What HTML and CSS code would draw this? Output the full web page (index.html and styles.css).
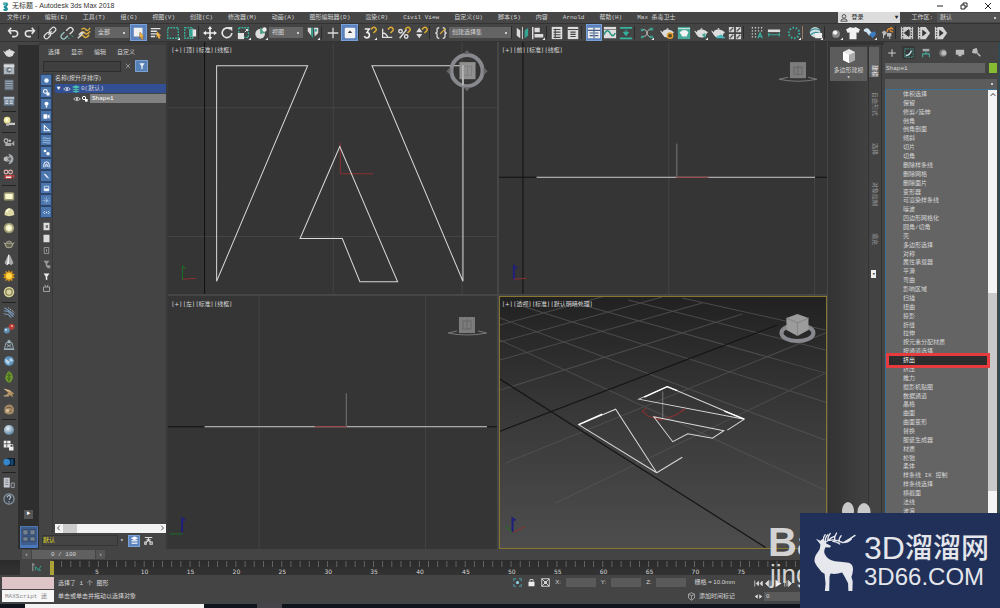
FILE: index.html
```html
<!DOCTYPE html>
<html lang="zh-CN">
<head>
<meta charset="utf-8">
<title>无标题 - Autodesk 3ds Max 2018</title>
<link rel="stylesheet" href="styles.css">
</head>
<body>
<svg class="sprite" aria-hidden="true">
  <defs>
    <linearGradient id="shade" x1="0" y1="0" x2="0" y2="1"><stop offset="0" stop-color="#212121"/><stop offset=".5" stop-color="#3a3a3a"/><stop offset="1" stop-color="#4d4d4d"/></linearGradient>
    <radialGradient id="pearl" cx=".4" cy=".35" r=".7"><stop offset="0" stop-color="#e8f2f8"/><stop offset="1" stop-color="#4d7896"/></radialGradient>
    <radialGradient id="cream" cx=".5" cy=".5" r=".55"><stop offset="0" stop-color="#fffff0"/><stop offset=".55" stop-color="#f4f2c0"/><stop offset="1" stop-color="#8d8b67"/></radialGradient>
  </defs>
  <symbol id="undo" viewBox="0 0 16 16"><path d="M6 2 3 5.500l3 3.500M3 5.500h7a3.300 3.300 0 0 1 0 6.600H7" fill="none" stroke="#e4e4e4" stroke-width="1.800"/></symbol>
  <symbol id="redo" viewBox="0 0 16 16"><path d="m10 2 3 3.500L10 9M13 5.500H6a3.300 3.300 0 0 0 0 6.600h3" fill="none" stroke="#e4e4e4" stroke-width="1.800"/></symbol>
  <symbol id="link" viewBox="0 0 16 16"><g fill="none" stroke="#ddd" stroke-width="1.500"><rect x="7" y="2.500" width="8" height="5" rx="2.500" transform="rotate(-45 11 5)"/><rect x="1" y="8.500" width="8" height="5" rx="2.500" transform="rotate(-45 5 11)"/><path d="m6 10 4-4"/></g></symbol>
  <symbol id="unlink" viewBox="0 0 16 16"><g fill="none" stroke-width="1.500"><path d="M7 5.500 10 2.500a2.500 2.500 0 0 1 4 4L11 9.500" stroke="#ddd"/><path d="m9 11-3 3a2.500 2.500 0 0 1-4-4l3-3" stroke="#9fc6c8"/></g><path d="m9 13 2 2M13 11l2 1" stroke="#39b6a4"/></symbol>
  <symbol id="bind" viewBox="0 0 16 16"><g fill="none" stroke-width="1.600"><path d="M5 4q3-3 5 0t5-2M4 8q3-3 5 0t6-2M3 12q3-3 5 0t6-2" stroke="#d9a93a"/><path d="m1 14 7-7M2 10l4-3" stroke="#ddd"/></g></symbol>
  <symbol id="select" viewBox="0 0 16 16"><path d="M2 2h10v10H2z" fill="#f0f0f0"/><path d="m9 7 5 5-2 .2 1 2.800-2 .7-1-3-1.500 1.500z" fill="#eeb34b" stroke="#6b5221" stroke-width=".5"/></symbol>
  <symbol id="byname" viewBox="0 0 16 16"><path d="M2 3h11M2 6h7M2 9h9M2 12h5" stroke="#e5e5e5" stroke-width="1.600"/><path d="m9 6 5 5-2 .2 1 2.800-2 .7-1-3-1.500 1.500z" fill="#eeb34b"/></symbol>
  <symbol id="marquee" viewBox="0 0 16 16"><rect x="2" y="2" width="12" height="12" fill="none" stroke="#37b8a3" stroke-width="1.500" stroke-dasharray="2 1.200"/><path d="M16 13v3h-3z" fill="#eee"/></symbol>
  <symbol id="window" viewBox="0 0 16 16"><rect x="2" y="2" width="9" height="12" fill="none" stroke="#37b8a3" stroke-width="1.500" stroke-dasharray="2 1.200"/><path d="M7 4h8v8H7z" fill="#e5e5e5"/><path d="M7 4h4v8H7z" fill="#34a391"/></symbol>
  <symbol id="move" viewBox="0 0 16 16"><path d="M8 2v12M2 8h12" stroke="#eee" stroke-width="1.800"/><path d="m8 0 2.500 3.500h-5zM8 16l2.500-3.500h-5zM0 8l3.500-2.500v5zM16 8l-3.500-2.500v5z" fill="#eee"/></symbol>
  <symbol id="rotate" viewBox="0 0 16 16"><path d="M11.500 3.500A5.500 5.500 0 1 0 13.500 8" fill="none" stroke="#e5e5e5" stroke-width="1.900"/><path d="M9 1h5v5z" fill="#e5e5e5"/></symbol>
  <symbol id="scale" viewBox="0 0 16 16"><rect x="2" y="2" width="11" height="11" fill="none" stroke="#37b8a3" stroke-width="1.500" stroke-dasharray="2 1.200"/><path d="M1 8h7v7H1z" fill="#e2e2e2"/><path d="m9 7 3-3M10 4h2v2" stroke="#fff"/><path d="M16 13v3h-3z" fill="#eee"/></symbol>
  <symbol id="place" viewBox="0 0 16 16"><circle cx="7" cy="9" r="5.500" fill="#ddd"/><path d="M7 9V2a6 6 0 0 1 6 6z" fill="#4f9f80"/><circle cx="12" cy="4" r="2.500" fill="#eee"/><path d="M16 13v3h-3z" fill="#eee"/></symbol>
  <symbol id="pivot" viewBox="0 0 16 16"><path d="M2 2h4v9L2 6zM9 2h5v6l-4 4z" fill="#ddd"/><path d="M6 2h2v12l-2-3z" fill="#34a391"/><circle cx="11" cy="5" r="1.500" fill="#34a391"/><path d="M16 13v3h-3z" fill="#eee"/></symbol>
  <symbol id="plus" viewBox="0 0 16 16"><path d="M8 2v12M2 8h12" stroke="#d8d8d8" stroke-width="1.500"/></symbol>
  <symbol id="key" viewBox="0 0 16 16"><rect x="2" y="2" width="12" height="12" rx="1.500" fill="#f2f2f2"/><path d="M8 5 10.500 8h-5z" fill="#333"/></symbol>
  <symbol id="magnet" viewBox="0 0 16 16"><path d="m9 4 2-2a2.500 2.500 0 0 1 3.500 3.500l-2.500 2.500" fill="none" stroke="#dfae33" stroke-width="1.700"/></symbol>
  <symbol id="snap" viewBox="0 0 16 16"><path d="M2 3.500h5L4.500 7.500a3 3 0 1 1-3 4" fill="none" stroke="#eee" stroke-width="1.800"/><use href="#magnet"/><path d="M16 13v3h-3z" fill="#eee"/></symbol>
  <symbol id="angle" viewBox="0 0 16 16"><path d="M3 3v10h11M3 8q4 0 6 5" fill="none" stroke="#ddd" stroke-width="1.500"/><use href="#magnet"/></symbol>
  <symbol id="percent" viewBox="0 0 16 16"><g fill="none" stroke="#ddd" stroke-width="1.600"><circle cx="4" cy="6" r="2"/><circle cx="10.500" cy="12" r="2"/><path d="M11 4 3 14"/></g><use href="#magnet"/></symbol>
  <symbol id="spin" viewBox="0 0 16 16"><path d="m6 2 3.500 5h-7zM6 14l3.500-5h-7z" fill="#ddd"/><use href="#magnet"/></symbol>
  <symbol id="sets" viewBox="0 0 16 16"><path d="M6 2q-3 0-2.500 3T1.500 8q2.500 0 2 3T6 14M10 2q3 0 2.500 3t2 3q-2.500 0-2 3T10 14" fill="none" stroke="#ddd" stroke-width="1.500"/><path d="m7 9 6-6" stroke="#dfae33" stroke-width="1.500"/></symbol>
  <symbol id="mirror" viewBox="0 0 16 16"><path d="m2 2 4 3v9l-4-3z" fill="#ddd"/><path d="m15 2-4 3v9l4-3z" fill="#34a391"/><path d="M8.500 1v14" stroke="#ddd"/></symbol>
  <symbol id="align" viewBox="0 0 16 16"><path d="M2 1v14" stroke="#eee" stroke-width="1.500"/><path d="M4 2h6v5H4zM4 9h10v4H4z" fill="#ddd"/><path d="M16 13v3h-3z" fill="#eee"/></symbol>
  <symbol id="sheet" viewBox="0 0 16 16"><path d="M2 1h12v14H2z" fill="#ddd"/><path d="M4 4h8M4 7h8M4 10h8M4 13h8M6 3v11" stroke="#444" stroke-width="1.200"/></symbol>
  <symbol id="sheet2" viewBox="0 0 16 16"><path d="M2 1h12v14H2z" fill="#ddd"/><path d="M2 4h12M5 7h6M5 9.500h6M5 12h6" stroke="#444" stroke-width="1.300"/></symbol>
  <symbol id="grid4" viewBox="0 0 16 16"><path d="M1 2h14v12H1z" fill="#eee"/><path d="M1 5h14M8 2v12M3 8h4M9 8h4M3 11h4M9 11h4" stroke="#435d86" stroke-width="1.300"/></symbol>
  <symbol id="curve" viewBox="0 0 16 16"><path d="M1 1h14v13H1z" fill="#ddd"/><path d="M1 10q4-8 7-2t6 0" fill="none" stroke="#258f7e" stroke-width="1.800"/><path d="M1 4h14" stroke="#777"/></symbol>
  <symbol id="schematic" viewBox="0 0 16 16"><path d="M1 2h14M1 14h14" stroke="#34b3a0" stroke-width="2"/><path d="M8 4v6M5 7l3 4 3-4z" fill="#34b3a0" stroke="#34b3a0"/></symbol>
  <symbol id="nodes" viewBox="0 0 16 16"><path d="M3 4q5 0 5 4t6 5M3 12q5 0 5-4t6-5" fill="none" stroke="#ccc"/><path d="M1 3h3v3H1zM1 11h3v3H1zM11 2h4v3h-4zM11 11h4v3h-4z" fill="#399d8d"/><path d="M16 13v3h-3z" fill="#eee"/></symbol>
  <symbol id="teapot" viewBox="0 0 16 16"><path d="M2 6 0 5l3 5q2 4 7 3 4-1 4-4l2-2-3-2q-5-2-9 0l-1 2z" fill="#ddd"/><path d="M7 4q2-3 3 0" fill="#eee"/></symbol>
  <symbol id="tpset" viewBox="0 0 16 16"><use href="#teapot"/><circle cx="11.500" cy="11" r="3" fill="#5f4a24" stroke="#e3a232" stroke-width="1.600"/></symbol>
  <symbol id="tpwin" viewBox="0 0 16 16"><path d="M1 1h14v14H1z" fill="#47a99a"/><path d="M1 3h14" stroke="#eee"/><path d="M3 7q6-5 10 0l-2 5H6z" fill="#f2f2f2"/></symbol>
  <symbol id="tpgo" viewBox="0 0 16 16"><use href="#teapot"/><path d="m9 10 4-2v6z" fill="#35a794"/><path d="M16 13v3h-3z" fill="#eee"/></symbol>
  <symbol id="tpcloud" viewBox="0 0 16 16"><use href="#teapot"/><path d="M6 14q0-4 3-3 3-3 5 1 2 0 2 2z" fill="#4cb6bb"/></symbol>
  <symbol id="gallery" viewBox="0 0 16 16"><path d="M1 1h6v6H1zM9 1h6v6H9zM1 9h6v6H1zM9 9h6v6H9z" fill="#d7d7d7"/><path d="m2 6 4-4M10 6l4-4M2 14l4-4M10 14l4-4" stroke="#555" stroke-width="1.500"/></symbol>
  <symbol id="dots" viewBox="0 0 16 16"><path d="M2 2h12M2 5.500h12M2 9h7M2 12.500h7" stroke="#ccc" stroke-width="1.500" stroke-dasharray="1.500 2"/><path d="m9 14 2.500-6 2.500 6M10 12h3" stroke="#37b8a3" stroke-width="1.300" fill="none"/></symbol>
  <symbol id="measure" viewBox="0 0 16 16"><path d="M1 4h14v3H1z" fill="#ddd"/><path d="M1 10h14M2 8v4M14 8v4" stroke="#35a794" stroke-width="1.400"/></symbol>
  <symbol id="circle" viewBox="0 0 16 16"><circle cx="8" cy="8" r="6" fill="none" stroke="#37b8a3" stroke-width="2.200" stroke-dasharray="1.700 2"/><path d="M16 13v3h-3z" fill="#eee"/></symbol>
  <symbol id="globe" viewBox="0 0 16 16"><circle cx="7" cy="7" r="6" fill="#cfdde0"/><path d="M1 6q5-5 12-1M2 10q5-5 11-1" stroke="#378f96" fill="none" stroke-width="1.500"/><path d="M7 8h8v6H7z" fill="#eee"/><path d="M16 13v3h-3z" fill="#eee"/></symbol>
  <symbol id="sphere" viewBox="0 0 16 16"><circle cx="8" cy="9" r="4.500" fill="#898989"/><circle cx="7" cy="7.500" r="2.500" fill="#f4f4f4"/><path d="M16 13v3h-3z" fill="#eee"/></symbol>
  <symbol id="shirt" viewBox="0 0 16 16"><path d="m5 1-5 3 2 4 2-1v8h8V7l2 1 2-4-5-3q-3 2-6 0z" fill="#f1f1f1"/></symbol>
  <symbol id="brush" viewBox="0 0 16 16"><path d="M1 4q4-3 6 0l3 4-3 3-3-4-3-1z" fill="#cfe5f3"/><path d="m7 9 6-3 2 3-4 5z" fill="#3d7fc6"/><path d="M16 13v3h-3z" fill="#eee"/></symbol>
  <symbol id="burst" viewBox="0 0 16 16"><path d="m2 7 3-2 3 3-3 3zM8 8h5v4H8z" fill="#bbb"/><path d="M8 7q0-5 6-4M12 1l3 3M11 5l4 2" stroke="#e08a3a" stroke-width="1.600" fill="none"/><path d="M4 9v5M11 12v3" stroke="#ccc"/></symbol>
  <symbol id="film" viewBox="0 0 16 16"><path d="M1 1h9l5 7-5 7H1z" fill="#d4d4d4"/><path d="M3 1v14" stroke="#444" stroke-width="1.500" stroke-dasharray="1.500 1.500"/><path d="m6 4 5 4-5 4z" fill="#333"/></symbol>
  <symbol id="filml" viewBox="0 0 16 16"><path d="M1 1h14v14H1z" fill="#ccc"/><path d="M3 1v14M13 1v14" stroke="#444" stroke-width="1.500" stroke-dasharray="1.500 1.500"/><path d="m10 4-5 4 5 4zM11 5v6" fill="#333" stroke="#333"/></symbol>
  <symbol id="panel" viewBox="0 0 16 16"><path d="M1 1h14v14H1z" fill="#aeb6bd"/><path d="M1 4h14" stroke="#e6e6e6" stroke-width="2"/><circle cx="8" cy="9" r="3.500" fill="#67737d"/><path d="m6 10 3-3 3 3" fill="#eee"/></symbol>
  <symbol id="lines" viewBox="0 0 16 16"><path d="M2 1h12v14H2z" fill="#65707a"/><path d="M3 3h10M3 6h10M3 9h10M3 12h10" stroke="#a9bccd"/></symbol>
  <symbol id="table" viewBox="0 0 16 16"><path d="M1 2h14v12H1z" fill="#72879a"/><path d="M1 4h14M3 8h4M3 11h4M9 8h4M9 11h4" stroke="#eee" stroke-width="1.500"/></symbol>
  <symbol id="bulb" viewBox="0 0 16 16"><circle cx="5.500" cy="5.500" r="4.500" fill="#eee79b"/><path d="M4 10h4v3H4z" fill="#bbb"/><path d="M8 9h8v3H8z" fill="#c9c9c9"/><circle cx="5" cy="5" r="2" fill="#fffce1"/></symbol>
  <symbol id="cam" viewBox="0 0 16 16"><circle cx="4" cy="5" r="2.500" fill="none" stroke="#bbb" stroke-width="1.500"/><circle cx="9" cy="5" r="1.800" fill="#bbb"/><path d="M3 8h8v4H3zM11 9l4-4v7z" fill="#aaa"/></symbol>
  <symbol id="moon" viewBox="0 0 16 16"><path d="M7 1a7 7 0 0 1 0 14q5-7 0-14" fill="#9ca6aa"/><path d="m1 6 5-2v8l-5-2z" fill="#bbb"/><circle cx="9" cy="8" r="3" fill="#666" stroke="#ccc"/></symbol>
  <symbol id="redcam" viewBox="0 0 16 16"><circle cx="4" cy="4" r="2.500" fill="none" stroke="#e4b5b5" stroke-width="1.500"/><circle cx="10" cy="4" r="2.500" fill="none" stroke="#e4b5b5" stroke-width="1.500"/><path d="M2 8h10v5H2zM12 9l3-2v6z" fill="#c94040"/><path d="M4 10h7v2H4z" fill="#eee"/></symbol>
  <symbol id="plane" viewBox="0 0 16 16"><rect x="1" y="3" width="14" height="11" rx="2" fill="#9b9971"/><rect x="3" y="5" width="10" height="7" rx="1" fill="#fbf9cf"/></symbol>
  <symbol id="dome" viewBox="0 0 16 16"><path d="M2 12Q2 3 8.500 3T15 12q-7 3-13 0" fill="#dcd9a5"/><path d="M5 8q1-4 4-4" stroke="#fffde0" stroke-width="2" fill="none"/></symbol>
  <symbol id="disc" viewBox="0 0 16 16"><circle cx="8" cy="8" r="7" fill="#9a9872"/><circle cx="8" cy="8" r="5.500" fill="url(#cream)"/></symbol>
  <symbol id="pot" viewBox="0 0 16 16"><path d="M3 7h10l-1 5q-4 2-8 0zM1 6l3 4M15 6l-3 4M4 6q4-4 8 0" fill="#656452" stroke="#a9a891" stroke-width="1.300"/></symbol>
  <symbol id="cone" viewBox="0 0 16 16"><path d="M7 1h2l5 11-3 3-3-2-3 2-3-3z" fill="#aaa"/><path d="M7 1h1v12l-3 2z" fill="#eee"/></symbol>
  <symbol id="sun" viewBox="0 0 16 16"><path d="m8 0 1.500 3 3-2v3.500l3.500 1L13.500 8l2.500 2.500-3.500.5v4l-3-2L8 16l-1.500-3-3 2v-4L0 10.500 2.500 8 0 5.500l3.500-1V1l3 2z" fill="#d5961c"/><circle cx="8" cy="8" r="4" fill="#ffd744"/></symbol>
  <symbol id="ring" viewBox="0 0 16 16"><circle cx="8" cy="8" r="7" fill="#d8d39c"/><circle cx="8" cy="8" r="5" fill="#817b4f"/><circle cx="8" cy="8" r="3.500" fill="#d8d3a0"/></symbol>
  <symbol id="waves" viewBox="0 0 16 16"><path d="m1 5 6 1 7 7M2 1l6 4 7 5M1 9l6 1 4 4" fill="none" stroke="#7896b5" stroke-width="1.500"/><path d="m7 1 8 6" stroke="#c6d5df" stroke-dasharray="1.500 1.500" stroke-width="1.300"/></symbol>
  <symbol id="molecule" viewBox="0 0 16 16"><path d="m5 10 6-5" stroke="#ccc" stroke-width="3"/><circle cx="5" cy="10" r="4" fill="#608caf"/><circle cx="11.500" cy="5" r="4" fill="#b63c38"/><circle cx="4" cy="9" r="1.500" fill="#c3dfef"/><circle cx="12" cy="4" r="1.300" fill="#f3b0a2"/></symbol>
  <symbol id="rig" viewBox="0 0 16 16"><path d="M8 1v4M4 5h8l2 8H2zM5 7l6 4M11 7l-6 4M1 14h14" fill="none" stroke="#9eb4c2" stroke-width="1.200"/><path d="M6 2h4v3H6z" fill="#aabbc8"/></symbol>
  <symbol id="ball" viewBox="0 0 16 16"><circle cx="8" cy="8" r="6.500" fill="#5c93bd"/><path d="m3 5 4 2 4-3 3 4-4 1-3 4-4-4z" fill="#b9d4e8"/><path d="m7 7 3 2" stroke="#336a98"/></symbol>
  <symbol id="leaf" viewBox="0 0 16 16"><path d="M8 0q6 4 5 10-2 5-5 6-4-2-5-6Q3 4 8 0" fill="#6f9b32"/><path d="M8 2v13M8 7 5 5M8 7l3-2M8 11l-3-2M8 11l3-2" stroke="#354f16"/></symbol>
  <symbol id="bird" viewBox="0 0 16 16"><path d="m1 2 8 2 6 5-3 1 2 4-5-3-7 1 5-4z" fill="#b39061"/><path d="m2 3 8 3M1 12h7" stroke="#e6d5b3"/></symbol>
  <symbol id="rock" viewBox="0 0 16 16"><path d="M2 6q4-6 10-3 5 6 1 11-6 3-11-1z" fill="#a48965"/><path d="M4 7q4-3 8 0M4 11h7" stroke="#574838" fill="none"/><circle cx="6" cy="10" r="2.500" fill="#d1bd98"/></symbol>
  <symbol id="pearlball" viewBox="0 0 16 16"><circle cx="8" cy="8" r="6.800" fill="url(#pearl)"/></symbol>
  <symbol id="lockwin" viewBox="0 0 16 16"><path d="M1 1h9v9H1z" fill="#eee"/><path d="M1 5h9M5 1v9" stroke="#444"/><path d="M8 9h6v5H8z" fill="#eee"/><path d="M9 9V6h4v3" fill="none" stroke="#ddd"/></symbol>
  <symbol id="toggle" viewBox="0 0 16 16"><rect x="5" y="3" width="11" height="10" fill="#061421"/><circle cx="5" cy="8" r="4.500" fill="#3586cb"/><path d="M10 4h4v8h-4z" fill="#164673"/></symbol>
  <symbol id="doc" viewBox="0 0 16 16"><path d="M1 1h8v13H1z" fill="#c6cad3"/><path d="M3 4h4M3 7h4M3 10h4" stroke="#666"/><path d="M11 8h4v6h-4z" fill="none" stroke="#a9b2bd"/></symbol>
  <symbol id="help" viewBox="0 0 16 16"><circle cx="8" cy="8" r="6.800" fill="#3d444b" stroke="#8e9caa" stroke-width="1.500"/><path d="M5.500 6q.5-3 3-2.500 3 1 1 3.500l-1.500 2M8 11v1.500" fill="none" stroke="#b5c4d2" stroke-width="1.500"/></symbol>
  <symbol id="f-dot" viewBox="0 0 12 12"><circle cx="6" cy="6" r="3" fill="#eef5ff"/></symbol>
  <symbol id="f-shape" viewBox="0 0 12 12"><circle cx="4.500" cy="4.500" r="2.500" fill="none" stroke="#fff" stroke-width="1.500"/><path d="M6 6h4v4H6z" fill="#fff"/></symbol>
  <symbol id="f-light" viewBox="0 0 12 12"><circle cx="6" cy="5" r="2.800" fill="#fff"/><path d="M5 8h2v2H5z" fill="#fff"/></symbol>
  <symbol id="f-cam" viewBox="0 0 12 12"><path d="M2 3h5v6H2zM7.500 5 10 3v6L7.500 7z" fill="#fff"/></symbol>
  <symbol id="f-angle" viewBox="0 0 12 12"><path d="M3 2v7h7z" fill="none" stroke="#fff" stroke-width="1.400"/></symbol>
  <symbol id="f-wave" viewBox="0 0 12 12"><path d="M1 3q2-1 5 0t5 0M1 6q2-1 5 0t5 0M1 9q2-1 5 0t5 0" stroke="#b8d1eb" fill="none"/></symbol>
  <symbol id="f-group" viewBox="0 0 12 12"><circle cx="4" cy="4" r="1.800" fill="#fff"/><circle cx="8" cy="7.500" r="2.200" fill="#fff"/></symbol>
  <symbol id="f-arc" viewBox="0 0 12 12"><path d="M2.500 10V6a3.500 3.500 0 0 1 7 0v4M5 9V6q1-1 2 0v3" fill="none" stroke="#fff" stroke-width="1.300"/></symbol>
  <symbol id="f-bone" viewBox="0 0 12 12"><path d="m2 2 3 1 5 6-4-2z" fill="#fff"/></symbol>
  <symbol id="f-box" viewBox="0 0 12 12"><path d="M3 3h6v6H3z" fill="none" stroke="#e8f2ff"/><path d="M3 6h6v3H3z" fill="#fff"/></symbol>
  <symbol id="f-star" viewBox="0 0 12 12"><path d="M6 1v10M1 6h10M2.500 2.500l7 7M9.500 2.500l-7 7" stroke="#c7def8" stroke-dasharray="1 1"/></symbol>
  <symbol id="f-eye" viewBox="0 0 12 12"><path d="M4 4 2 6l2 2M8 4l2 2-2 2" stroke="#dcecff" fill="none"/><circle cx="6" cy="6" r="1" fill="#fff"/></symbol>
  <symbol id="f-list" viewBox="0 0 12 12"><path d="M2 1h8v10H2z" fill="#ddd"/><path d="M5 4h3v4H5z" fill="#777"/></symbol>
  <symbol id="f-sq" viewBox="0 0 12 12"><path d="M2 1h8v10H2z" fill="#ddd"/></symbol>
  <symbol id="f-sqo" viewBox="0 0 12 12"><path d="M3 2h6v8H3zM6 4v4" fill="none" stroke="#aaa"/></symbol>
  <symbol id="funnel" viewBox="0 0 12 12"><path d="M2 2h8L7 6v5l-2-1V6z" fill="#eee"/></symbol>
  <symbol id="f-fx" viewBox="0 0 12 12"><path d="M2 1h8L7 5v5L5 8V5zM7 7h4v4H7z" fill="#999"/></symbol>
  <symbol id="f-tv" viewBox="0 0 12 12"><path d="M2 4h8v6H2zM4 1l1 3M8 1 7 4" fill="none" stroke="#bbb"/></symbol>
  <symbol id="c-mod" viewBox="0 0 12 12"><path d="M1 1h10v10H1z" fill="none" stroke="#43b0a0" stroke-dasharray="2 1"/><path d="M2 9q5 0 7-6" stroke="#b6dce0" stroke-width="1.800" fill="none"/></symbol>
  <symbol id="c-hier" viewBox="0 0 12 12"><path d="M2 1h8v3H2z" fill="#aaa"/><path d="M6 4v3M2 11V7h8v4" fill="none" stroke="#45a99a" stroke-width="1.300"/></symbol>
  <symbol id="c-motion" viewBox="0 0 12 12"><circle cx="6" cy="6" r="4.500" fill="#777"/><circle cx="7" cy="6" r="3" fill="#bbb"/></symbol>
  <symbol id="c-disp" viewBox="0 0 12 12"><path d="M1 2h10v6H1zM4 10h4V8H4z" fill="#bbb"/></symbol>
  <symbol id="c-tool" viewBox="0 0 12 12"><path d="m4 4 6 6M2 2l3-1 1 3-2 2-3-1z" stroke="#bbb" stroke-width="1.800" fill="#bbb"/></symbol>
  <symbol id="layers" viewBox="0 0 12 12"><path d="m6 1 5 2-5 2-5-2zM1 6l5 2 5-2M1 9l5 2 5-2" fill="#4ec7b0" stroke="#4ec7b0"/></symbol>
  <symbol id="eye" viewBox="0 0 12 12"><path d="M1 6q5-5 10 0-5 5-10 0z" fill="none" stroke="#eee"/><circle cx="6" cy="6" r="1.500" fill="#eee"/></symbol>
  <symbol id="lock" viewBox="0 0 12 12"><path d="M2 5h8v6H2z" fill="#eee"/><path d="M4 5V2h4v3M6 7v2" fill="none" stroke="#eee"/></symbol>
  <symbol id="isolate" viewBox="0 0 12 12"><path d="M1 4V1h3M8 1h3v3M11 8v3H8M4 11H1V8" fill="none" stroke="#51b6c6"/><circle cx="6" cy="6" r="2" fill="#8cdbe6"/></symbol>
  <symbol id="coord" viewBox="0 0 12 12"><path d="M1 1h10v10H1zM1 1l10 10M11 1 1 11" fill="none" stroke="#ddd" stroke-width="1.200"/><circle cx="6" cy="6" r="2" fill="#ddd"/></symbol>
  <symbol id="cubeicon" viewBox="0 0 12 12"><path d="m6 1 4 2v5l-4 3-4-3V3zM2 3l4 2 4-2M6 5v5" fill="none" stroke="#bbb"/></symbol>
</svg>

<header>
  <div class="titlebar">
    <svg class="app-logo" viewBox="0 0 12 16" aria-hidden="true"><path d="M2 1h7l2 4-3 3 3 5-3 3H3l-1-3 3-1-3-3 3-3-3-1z" fill="#21939a"/><path d="m3 2 4 1-1 3z" fill="#7bd2cc"/></svg>
    <h1>无标题 - Autodesk 3ds Max 2018</h1>
    <div class="win-controls">
      <button aria-label="最小化"><svg viewBox="0 0 8 8"><path d="M1 4h6" stroke="#222"/></svg></button>
      <button aria-label="还原"><svg viewBox="0 0 8 8"><path d="M1 3h4v4H1zM3 3V1h4v4H5" fill="none" stroke="#222"/></svg></button>
      <button aria-label="关闭"><svg viewBox="0 0 8 8"><path d="m1 1 6 6M7 1 1 7" stroke="#222"/></svg></button>
    </div>
  </div>
  <nav class="menubar">
    <button>文件(F)</button><button>编辑(E)</button><button>工具(T)</button><button>组(G)</button><button>视图(V)</button><button>创建(C)</button><button>修改器(M)</button><button>动画(A)</button><button>图形编辑器(D)</button><button>渲染(R)</button><button>Civil View</button><button>自定义(U)</button><button>脚本(S)</button><button>内容</button><button>Arnold</button><button>帮助(H)</button><button>Max 杀毒卫士</button>
    <div class="account">
      <button class="login"><svg viewBox="0 0 10 10" aria-hidden="true"><circle cx="5" cy="3" r="2.300" fill="none" stroke="#333"/><path d="M1 9q0-3 4-3t4 3z" fill="none" stroke="#333"/></svg>登录<span class="caret">▼</span></button>
      <label for="workspace">工作区:</label>
      <select id="workspace" class="combo ws"><option>默认</option></select>
    </div>
  </nav>
  <div class="toolbar">
    <button aria-label="撤消"><svg><use href="#undo"/></svg></button><button aria-label="重做"><svg><use href="#redo"/></svg></button><i class="sep"></i>
    <button aria-label="链接"><svg><use href="#link"/></svg></button><button aria-label="取消链接"><svg><use href="#unlink"/></svg></button><button aria-label="绑定"><svg><use href="#bind"/></svg></button><i class="gap"></i>
    <select class="combo short" aria-label="选择过滤器"><option>全部</option></select>
    <button class="on" aria-label="选择对象"><svg><use href="#select"/></svg></button><button aria-label="按名称选择"><svg><use href="#byname"/></svg></button><button aria-label="矩形选区"><svg><use href="#marquee"/></svg></button><button aria-label="窗口/交叉"><svg><use href="#window"/></svg></button><i class="sep"></i>
    <button aria-label="移动"><svg><use href="#move"/></svg></button><button aria-label="旋转"><svg><use href="#rotate"/></svg></button><button aria-label="缩放"><svg><use href="#scale"/></svg></button><button aria-label="放置"><svg><use href="#place"/></svg></button>
    <select class="combo short" aria-label="参考坐标系"><option>视图</option></select>
    <button aria-label="轴点中心"><svg><use href="#pivot"/></svg></button><i class="sep"></i>
    <button aria-label="操纵"><svg><use href="#plus"/></svg></button><button class="on" aria-label="快捷键覆盖"><svg><use href="#key"/></svg></button><i class="sep"></i>
    <button aria-label="捕捉"><svg><use href="#snap"/></svg></button><button aria-label="角度捕捉"><svg><use href="#angle"/></svg></button><button aria-label="百分比捕捉"><svg><use href="#percent"/></svg></button><button aria-label="微调器捕捉"><svg><use href="#spin"/></svg></button><i class="sep"></i>
    <button aria-label="编辑选择集"><svg><use href="#sets"/></svg></button>
    <select class="combo long" aria-label="命名选择集"><option>创建选择集</option></select><i class="sep"></i>
    <button class="slim" aria-label="镜像"><svg><use href="#mirror"/></svg></button><button class="slim" aria-label="对齐"><svg><use href="#align"/></svg></button><i class="sep"></i>
    <button class="slim" aria-label="场景资源管理器"><svg><use href="#sheet"/></svg></button><button class="slim" aria-label="层资源管理器"><svg><use href="#sheet2"/></svg></button><i class="sep wide"></i>
    <button class="slim on" aria-label="功能区"><svg><use href="#grid4"/></svg></button><button class="slim" aria-label="曲线编辑器"><svg><use href="#curve"/></svg></button><button class="slim" aria-label="图解视图"><svg><use href="#schematic"/></svg></button><i class="sep wide"></i>
    <button class="slim" aria-label="材质编辑器"><svg><use href="#nodes"/></svg></button><i class="gap"></i>
    <button aria-label="渲染设置"><svg><use href="#tpset"/></svg></button><button aria-label="渲染帧窗口"><svg><use href="#tpwin"/></svg></button><button aria-label="渲染"><svg><use href="#tpgo"/></svg></button><button aria-label="云渲染"><svg><use href="#tpcloud"/></svg></button><button aria-label="渲染库"><svg><use href="#gallery"/></svg></button><i class="sep wide"></i>
    <button aria-label="阵列"><svg><use href="#dots"/></svg></button><button aria-label="测量"><svg><use href="#measure"/></svg></button><i class="gap"></i><button aria-label="间隔"><svg><use href="#circle"/></svg></button><i class="sep wide warm"></i>
    <button aria-label="在线"><svg><use href="#globe"/></svg></button><i class="sep"></i>
    <button aria-label="球体"><svg><use href="#sphere"/></svg></button><button aria-label="布料"><svg><use href="#shirt"/></svg></button><button aria-label="笔刷"><svg><use href="#brush"/></svg></button><button aria-label="破碎"><svg><use href="#burst"/></svg></button><i class="sep"></i>
    <button aria-label="后退"><svg><use href="#filml"/></svg></button><button aria-label="播放"><svg><use href="#film"/></svg></button><button aria-label="前进"><svg><use href="#film"/></svg></button>
  </div>
</header>

<main>
  <aside class="sidebar">
    <button aria-label="茶壶"><svg><use href="#teapot"/></svg></button><button aria-label="渲染面板"><svg><use href="#panel"/></svg></button><button aria-label="列表"><svg><use href="#lines"/></svg></button><button aria-label="表格"><svg><use href="#table"/></svg></button><hr>
    <button aria-label="灯光"><svg><use href="#bulb"/></svg></button><hr>
    <button aria-label="摄影机"><svg><use href="#cam"/></svg></button><button aria-label="物理摄影机"><svg><use href="#moon"/></svg></button><button aria-label="立体摄影机"><svg><use href="#redcam"/></svg></button><hr>
    <button aria-label="平面光"><svg><use href="#plane"/></svg></button><button aria-label="穹顶光"><svg><use href="#dome"/></svg></button><button aria-label="球光"><svg><use href="#disc"/></svg></button><button aria-label="网格光"><svg><use href="#pot"/></svg></button><button aria-label="光域网"><svg><use href="#cone"/></svg></button><button aria-label="太阳"><svg><use href="#sun"/></svg></button><button aria-label="环境光"><svg><use href="#ring"/></svg></button><hr>
    <button aria-label="毛发"><svg><use href="#waves"/></svg></button><button aria-label="分子"><svg><use href="#molecule"/></svg></button><button aria-label="骨架"><svg><use href="#rig"/></svg></button><button aria-label="代理"><svg><use href="#ball"/></svg></button><button aria-label="植物"><svg><use href="#leaf"/></svg></button><button aria-label="鸟"><svg><use href="#bird"/></svg></button><button aria-label="岩石"><svg><use href="#rock"/></svg></button><hr>
    <button aria-label="材质球"><svg><use href="#pearlball"/></svg></button><button aria-label="锁定"><svg><use href="#lockwin"/></svg></button><button aria-label="开关"><svg><use href="#toggle"/></svg></button><hr>
    <button aria-label="文档"><svg><use href="#doc"/></svg></button><button aria-label="帮助"><svg><use href="#help"/></svg></button>
  </aside>

  <div class="layout-tabs">
    <button class="expand" aria-label="展开">▶</button>
    <button class="layout" aria-label="四视口布局"><svg viewBox="0 0 18 20"><path d="M2 3h6v6H2zM10 3h6v6h-6zM2 11h6v5H2zM10 11h6v5h-6z" fill="#75808f" stroke="#2c4163"/></svg></button>
  </div>

  <section class="explorer">
    <nav class="ex-menu"><button>选择</button><button>显示</button><button>编辑</button><button>自定义</button></nav>
    <div class="ex-search"><input type="text" aria-label="查找"><button aria-label="清除"><svg viewBox="0 0 8 8"><path d="m1 1 6 6M7 1 1 7" stroke="#aaa"/></svg></button><button class="filter" aria-label="过滤器"><svg><use href="#funnel"/></svg></button></div>
    <div class="ex-body">
      <div class="ex-filters">
        <button aria-label="几何体"><svg><use href="#f-dot"/></svg></button><button aria-label="图形"><svg><use href="#f-shape"/></svg></button><button aria-label="灯光"><svg><use href="#f-light"/></svg></button><button aria-label="摄影机"><svg><use href="#f-cam"/></svg></button><button aria-label="辅助对象"><svg><use href="#f-angle"/></svg></button><button aria-label="空间扭曲"><svg><use href="#f-wave"/></svg></button><button aria-label="组"><svg><use href="#f-group"/></svg></button><button aria-label="外部参照"><svg><use href="#f-arc"/></svg></button><button aria-label="骨骼"><svg><use href="#f-bone"/></svg></button><button aria-label="容器"><svg><use href="#f-box"/></svg></button><button aria-label="冻结"><svg><use href="#f-star"/></svg></button><button aria-label="隐藏"><svg><use href="#f-eye"/></svg></button>
        <i></i>
        <button class="off" aria-label="全部"><svg><use href="#f-list"/></svg></button><button class="off" aria-label="无"><svg><use href="#f-sq"/></svg></button><button class="off" aria-label="反转"><svg><use href="#f-sqo"/></svg></button>
        <i></i>
        <button class="off" aria-label="高级过滤"><svg><use href="#f-fx"/></svg></button><button class="off" aria-label="过滤"><svg><use href="#funnel"/></svg></button><button class="off" aria-label="显示器"><svg><use href="#f-tv"/></svg></button>
      </div>
      <div class="tree">
        <div class="tree-head">名称(按升序排序)</div>
        <div class="node root"><span class="tri">▼</span><svg><use href="#eye"/></svg><svg><use href="#layers"/></svg><span class="name">0(默认)</span></div>
        <div class="node child"><svg><use href="#eye"/></svg><svg><use href="#f-shape"/></svg><span class="name">Shape1</span></div>
        <div class="hscroll"><button aria-label="向左"><svg viewBox="0 0 8 8"><path d="M5 1 2 4l3 3" fill="none" stroke="#222"/></svg></button><span></span><button aria-label="向右"><svg viewBox="0 0 8 8"><path d="m3 1 3 3-3 3" fill="none" stroke="#222"/></svg></button></div>
      </div>
    </div>
    <div class="ex-foot">
      <select class="layer" aria-label="资源管理器"><option>默认</option></select><span>▾</span>
      <button class="on" aria-label="按层"><svg viewBox="0 0 12 12"><path d="m6 1 4 2-4 2-4-2zM2 6h8M2 8h8M2 10h8" stroke="#fff" fill="#fff"/></svg></button>
      <button aria-label="按层次"><svg viewBox="0 0 12 12"><path d="M1 2h10M3 5h6M3 8v3H1V8zM11 8v3H8V8zM6 2v5M3 8l3-2 3 2" stroke="#ddd" stroke-width="1.400" fill="none"/></svg></button>
    </div>
  </section>

  <section class="views">
    <div class="view">
      <svg viewBox="168 42 329 251" preserveAspectRatio="xMidYMid slice">
        <path class="grid" d="M333.500 42v251M461.500 42v251M168 107.500h329M168 235.500h329"/>
        <path class="axis" d="M205.500 42v251"/>
        <path class="gizmo" d="M340.500 142v31H373"/>
        <path class="wire" d="M217.500 65.500H308L217.500 280zM372 65.500h90.500V280zM340 146l-39.500 91.500h42l17.500 43h37.500z"/>
        <g class="cube"><circle cx="466.500" cy="70.500" r="15.500" fill="none" stroke="#88898e" stroke-width="4"/><path d="m463 54 3.500-4 3.500 4M463 87l3.500 4 3.500-4M450 67l-4 4 4 4M483 67l4 4-4 4" fill="#666"/><path d="M459 62h16v17h-16z" fill="#909090"/><path d="M463 66h8v9h-8zM467 65v11" stroke="#808080" fill="none"/></g>
        <path d="M462.500 65v20" class="wire"/>
        <path d="M183.500 279v-14l3 2" class="green"/><path d="m184 278 13-1" class="gizmo"/>
      </svg>
      <span class="vlabel">[+] [顶] [标准] [线框]</span>
    </div>
    <div class="view">
      <svg viewBox="499 42 328 251" preserveAspectRatio="xMidYMid slice">
        <path class="grid" d="M668.500 42v251M813.500 42v251"/><path class="axis" d="M523.500 42v251M499 176.500h328"/>
        <path class="wire" d="M537 176.500h277"/><path d="M676.500 143v33" stroke="#777"/><path class="gizmo" d="M676 176.500h32"/>
        <g class="cube"><path d="M778 79q19 4 38 0M778 79l9-2M816 79l-9-2" fill="none" stroke="#777"/><path d="M789 62h16v16h-16z" fill="#7c7c7c"/><path d="M793 67h8v7h-8zM797 65v10" fill="none" stroke="#666"/></g>
        <path d="M514.500 279v-14l3 2" class="blue"/><path d="m514 278 13-1" class="gizmo"/>
      </svg>
      <span class="vlabel">[+] [前] [标准] [线框]</span>
    </div>
    <div class="view">
      <svg viewBox="168 296 329 252" preserveAspectRatio="xMidYMid slice">
        <path class="grid" d="M259.500 296v252M425.500 296v252"/><path class="axis" d="M168 426.500h329"/>
        <path class="wire" d="M205 426.500h282"/><path d="M346.500 393v33" stroke="#777"/><path class="gizmo" d="M315 426.500h32"/>
        <g class="cube"><path d="M448 333q19 4 39 0M448 333l9-2M487 333l-9-2" fill="none" stroke="#777"/><path d="M459 317h16v16h-16z" fill="#7c7c7c"/><path d="M463 321h8v8h-8zM467 319v11" fill="none" stroke="#666"/></g>
        <path d="M182.500 532v-14l3 2" class="blue"/><path d="M170 533.500h13" class="green"/>
      </svg>
      <span class="vlabel">[+] [左] [标准] [线框]</span>
    </div>
    <div class="view active">
      <svg viewBox="499 296 328 252" preserveAspectRatio="xMidYMid slice">
        <path d="M499 296h328v252H499z" fill="url(#shade)"/>
        <path class="pgrid" d="M500 325l105-29M500 342l162-45M500 360l202-57M500 390l242-76M505 463l320-130M555 503l270-130M682 298l143 32M628 300l197 50M575 303l250 70M525 307l300 95M500 318l325 122M500 340l325 150"/>
        <path d="m500 431 277-106M500 379l265 168" stroke="#151515" fill="none" stroke-width="1.200"/>
        <path d="M662.500 391v28" stroke="#777"/><path class="gizmo" d="m646 408-4 3 6 5 12 4 15-5 10-6-4 1M655 416l5 4 6-2"/>
        <path class="wire" d="M578.500 424.500 615.500 409l41 63.500zM656.500 472.500 682 457M638.500 399l28.500-12.500 77 32.500zM744 419l-17 11M653.500 416.500l70 14-11.500 7.500-24.500-4.500-15 8z"/>
        <path d="M578.500 424.500 602 414M644 397l23-10.500 10 4M724 411l20 8" stroke="#fff" stroke-width="1.300" fill="none"/>
        <g class="cube"><ellipse cx="797" cy="333" rx="16" ry="8" fill="none" stroke="#88898e" stroke-width="4"/><path d="m797 314 11 4v12l-11 6-11-6v-12z" fill="#9c9c9c"/><path d="m786 318 11 5 11-5M797 323v13" stroke="#858585" fill="none"/></g>
        <path d="M512.500 532v-14l3 2" class="blue"/><path d="m513 532 12-6" class="gizmo"/><path d="m512 532-6-6" class="green"/>
      </svg>
      <span class="vlabel">[+] [透视] [标准] [默认明暗处理]</span>
    </div>
  </section>

  <aside class="ribbon">
    <div class="ribbon-body">
      <button class="poly"><svg viewBox="0 0 16 16" aria-hidden="true"><path d="m8 1 6 3v8l-6 3-6-3V4z" fill="#e8e8e8"/><path d="m2 4 6 3v8l-6-3z" fill="#fff"/><path d="m14 4-6 3v8l6-3z" fill="#aaa"/></svg>多边形建模<span>▾</span></button>
    </div>
    <div class="ribbon-tabs"><button class="cur">建模</button><button>自由形式</button><button>选择</button><button>对象绘制</button><button>填充</button><button class="pill" aria-label="最小化功能区">▪</button></div>
  </aside>

  <aside class="command">
    <nav class="cmd-tabs"><button aria-label="创建"><svg><use href="#plus"/></svg></button><button class="cur" aria-label="修改"><svg><use href="#c-mod"/></svg></button><button aria-label="层次"><svg><use href="#c-hier"/></svg></button><button aria-label="运动"><svg><use href="#c-motion"/></svg></button><button aria-label="显示"><svg><use href="#c-disp"/></svg></button><button aria-label="实用程序"><svg><use href="#c-tool"/></svg></button></nav>
    <div class="cmd-name"><input type="text" value="Shape1" aria-label="对象名称"><button aria-label="对象颜色"></button></div>
    <select class="combo modlist" aria-label="修改器列表"><option></option></select>
    <div class="drop">
      <ul role="listbox" aria-label="修改器">
        <li>体积选择</li><li>保留</li><li>修剪/延伸</li><li>倒角</li><li>倒角剖面</li><li>倾斜</li><li>切片</li><li>切角</li><li>删除样条线</li><li>删除网格</li><li>删除面片</li><li>变形器</li><li>可渲染样条线</li><li>噪波</li><li>四边形网格化</li><li>圆角/切角</li><li>壳</li><li>多边形选择</li><li>对称</li><li>属性承载器</li><li>平滑</li><li>弯曲</li><li>影响区域</li><li>扫描</li><li>扭曲</li><li>投影</li><li>折缝</li><li>拉伸</li><li>按元素分配材质</li><li>按通道选择</li><li class="marked">挤出</li><li>挤压</li><li>推力</li><li>摄影机贴图</li><li>数据通道</li><li>晶格</li><li>曲面</li><li>曲面变形</li><li>替换</li><li>服装生成器</li><li>材质</li><li>松弛</li><li>柔体</li><li>样条线 IK 控制</li><li>样条线选择</li><li>横截面</li><li>法线</li><li>波浪</li>
      </ul>
      <div class="vscroll"><button aria-label="向上"><svg viewBox="0 0 8 8"><path d="m1 5 3-3 3 3" fill="none" stroke="#222" stroke-width="1.300"/></svg></button><span></span></div>
    </div>
  </aside>
</main>

<footer>
  <div class="slider"><button aria-label="上一帧">‹</button><span>0 / 100</span><button aria-label="下一帧">›</button></div>
  <div class="trackbar">
    <button class="mini" aria-label="迷你曲线编辑器"><svg viewBox="0 0 12 12"><path d="M2 1v9M2 3h2" stroke="#aaa"/><path d="M5 9V5l3 4 3-5M8 9h3" stroke="#37a594" fill="none"/></svg></button>
    <div class="ruler"><span class="head"></span><span>5</span><span>10</span><span>15</span><span>20</span><span>25</span><span>30</span><span>35</span><span>40</span><span>45</span><span>50</span><span>55</span><span>60</span><span>65</span><span>70</span><span>75</span></div>
  </div>
  <div class="status">
    <div class="script"><span></span><input type="text" value="MAXScript 迷" aria-label="MAXScript 迷你侦听器"></div>
    <div class="messages"><p>选择了 1 个 图形</p><p>单击或单击并拖动以选择对象</p></div>
    <div class="readout">
      <div class="line">
        <button aria-label="孤立"><svg><use href="#isolate"/></svg></button><button aria-label="锁定选择"><svg><use href="#lock"/></svg></button><button aria-label="坐标模式"><svg><use href="#coord"/></svg></button>
        <label for="cx">X:</label><input id="cx" type="text"><label for="cy">Y:</label><input id="cy" type="text"><label for="cz">Z:</label><input id="cz" type="text">
        <span class="gridsize">栅格 = 10.0mm</span>
      </div>
      <div class="line tag"><button><svg><use href="#cubeicon"/></svg>添加时间标记</button></div>
    </div>
    <div class="playback">
      <div class="line"><button aria-label="转至开头"><svg viewBox="0 0 12 12"><path d="M1 2v8M6 3 3 6l3 3zM11 3 8 6l3 3z" fill="#ddd" stroke="#ddd"/></svg></button><button aria-label="上一帧"><svg viewBox="0 0 12 12"><path d="M6 2 2 6l4 4zM8 2v8M11 2v8" fill="#ddd" stroke="#ddd"/></svg></button><button aria-label="播放"><svg viewBox="0 0 12 12"><path d="m2 1 8 5-8 5z" fill="#eee"/></svg></button><button aria-label="下一帧"><svg viewBox="0 0 12 12"><path d="m6 2 4 4-4 4zM1 2v8M4 2v8" fill="#ddd" stroke="#ddd"/></svg></button></div>
      <div class="line"><button aria-label="关键点模式"><svg viewBox="0 0 12 12"><path d="M5 3 1 6l4 3zM7 3l4 3-4 3z" fill="#ddd"/></svg></button><input type="text" value="0" aria-label="当前帧"></div>
    </div>
  </div>
  <div class="taskbar"><i class="search"></i><i class="task"></i></div>
</footer>

<div class="bai"><b>Ba</b><span>jing</span></div>
<svg class="paw" viewBox="0 0 30 16" aria-hidden="true"><ellipse cx="7" cy="11" rx="6" ry="9" fill="#c9c9c9"/><ellipse cx="23" cy="12" rx="6.500" ry="9" fill="#c9c9c9"/></svg>
<div class="brand">
  <svg viewBox="930 115 145 190" aria-hidden="true">
    <path d="m945 144 13 6 8-6 5 8 8-1-4 7 10 5q9 3 2 8l-13-1q-7 12-2 21 8 17 30 21 26 2 42 5 13 4 13 20-1 13-5 23l4 13-1 29h-12l-1-23-9-18-9-15q-20 7-35 3l-3 9-1 44h-13l2-22-3-30q-10-4-15-13-9-9-14-20-5-13 6-29 12-14 10-27z" fill="#e6e8ee"/>
    <path d="M970 154q-6-11 3-22M974 152q-2-12 7-20M980 151q0-12 8-23M983 149q7-9 18-12M986 149q20-4 40 7 15 0 26-11M1001 152q-1-15 6-25M1015 154q-1-12 6-19M1028 156q16-9 35-22M996 152q11 1 21 8" fill="none" stroke="#e6e8ee" stroke-width="4" stroke-linecap="round"/>
  </svg>
  <div><strong><span>3D</span>溜溜网</strong><em>3D66.COM</em></div>
</div>
</body>
</html>
```

FILE: styles.css
```css
* { box-sizing: border-box; }
body {
  margin: 0;
  height: 100vh;
  display: flex;
  flex-direction: column;
  overflow: hidden;
  position: relative;
  background: #444;
  color: #d6d6d6;
  font: 6px/9px "Liberation Mono", "Noto Sans CJK SC", monospace;
}
button, input, select { font: inherit; color: inherit; border: 0; padding: 0; margin: 0; background: none; border-radius: 0; }
button { display: flex; align-items: center; justify-content: center; white-space: nowrap; flex: none; }
select, input { appearance: none; min-width: 0; }
.sprite { position: absolute; width: 0; height: 0; }

.titlebar { display: flex; align-items: center; height: 12px; background: #fff; color: #333; padding: 0 8px 0 2px; }
.app-logo { width: 7px; height: 9px; }
h1 { margin: 0 auto 0 3px; font: 7px/12px "Liberation Sans", "Noto Sans CJK SC", sans-serif; }
.win-controls { display: flex; gap: 16px; }
.win-controls svg { width: 8px; height: 8px; }

.menubar { display: flex; align-items: center; gap: 15px; height: 11px; padding-left: 7px; background: #464646; }
.account { display: flex; align-items: center; margin-left: auto; }
.login { width: 62px; height: 11px; background: #dcdcdc; color: #222; padding: 0 2px; gap: 3px; margin-right: 11px; }
.login svg { width: 8px; height: 8px; }
.caret { margin-left: auto; }
.combo { background: #646464; padding: 0 3px; height: 9px; line-height: 9px; background-image: linear-gradient(#ccc, #ccc); background-size: 2px 2px; background-repeat: no-repeat; background-position: right 4px center; }
.ws { width: 63px; margin-left: 4px; background-color: #555; }

.toolbar { display: flex; align-items: center; height: 19px; padding-left: 4px; border-top: 1px solid #333; border-bottom: 1px solid #333; }
.toolbar button { width: 17px; height: 17px; }
.toolbar .slim { width: 16px; }
.toolbar svg { width: 14px; height: 14px; flex: none; }
.on { background: #5b82bd; border: 1px solid #7ba1d9; }
.sep { width: 3px; height: 13px; flex: none; border-left: 1px solid #2b2b2b; }
.sep.wide { width: 5px; }
.sep.warm { border-color: #9a7b65; }
.gap { width: 3px; flex: none; }
.toolbar .combo { height: 11px; flex: none; }
.short { width: 34px; margin-right: 1px; }
.long { width: 62px; }

main { flex: 1; min-height: 0; display: grid; grid-template-columns: 18px 21px 129px minmax(0, 1fr) 56px 116px; }
.sidebar { padding-top: 3px; overflow: hidden; }
.sidebar button { width: 18px; height: 16px; }
.sidebar svg { width: 12px; height: 12px; }
.sidebar hr { margin: 2px; border: 0; border-top: 1px solid #222; height: 1px; }

.layout-tabs { background: #2e2e2e; display: flex; flex-direction: column; align-items: center; justify-content: flex-end; gap: 7px; padding-bottom: 1px; border-top: 3px solid #444; }
.expand { width: 9px; height: 9px; background: #555; color: #fff; font-size: 4px; }
.layout { width: 18px; height: 22px; background: #3f5e8e; border: 1px solid #4c77b3; border-bottom: 3px solid #4b78bd; }
.layout svg { width: 16px; }

.explorer { display: flex; flex-direction: column; min-height: 0; border-right: 2px solid #393939; border-top: 3px solid #3c3c3c; }
.ex-menu { display: flex; gap: 11px; padding: 3px 0 2px 9px; }
.ex-search { display: flex; align-items: center; gap: 4px; height: 14px; padding-left: 4px; }
.ex-search input { width: 78px; height: 11px; background: #3f3f3f; border: 1px solid #2d2d2d; }
.ex-search button { width: 6px; height: 12px; }
.ex-search .filter { width: 13px; background: #5681b8; border: 1px solid #7c9fcd; }
.ex-search svg { width: 6px; height: 6px; flex: none; }
.ex-search .filter svg { width: 8px; height: 8px; }
.ex-body { flex: 1; min-height: 0; display: flex; gap: 2px; }
.ex-filters { width: 14px; padding: 1px; border-right: 1px solid #383838; }
.ex-filters button { width: 12px; height: 12px; background: #4a75ad; border: 1px solid #719acb; outline: 1px solid #2e4568; outline-offset: -1px; }
.ex-filters .off { background: none; border: 0; outline: 0; }
.ex-filters svg { width: 9px; height: 9px; }
.ex-filters i { display: block; height: 2px; }
.tree { flex: 1; display: flex; flex-direction: column; }
.tree-head { padding-top: 1px; height: 11px; font-family: "Liberation Sans", "Noto Sans CJK SC", sans-serif; }
.node { display: flex; align-items: center; height: 9px; }
.node svg { width: 8px; height: 8px; flex: none; }
.root { background: #334f94; gap: 1px; }
.tri { width: 7px; color: #fff; text-align: center; }
.child { padding-left: 18px; margin-top: 1px; }
.child .name { flex: 1; background: #818181; color: #fff; margin-left: 1px; padding-left: 2px; }
.hscroll { margin-top: auto; display: flex; height: 9px; background: #f4f4f4; }
.hscroll button { width: 8px; }
.hscroll svg { width: 6px; height: 6px; }
.hscroll span { width: 14px; background: #ccc; margin-right: auto; }
.ex-foot { display: flex; align-items: center; gap: 2px; height: 16px; padding-left: 3px; }
.layer { width: 76px; height: 11px; border: 1px solid #363636; color: #e3df23; }
.ex-foot span { width: 6px; }
.ex-foot button { width: 12px; height: 12px; }
.ex-foot svg { width: 9px; height: 9px; flex: none; }

.views { display: grid; grid-template: minmax(0, 1fr) minmax(0, 1fr) / minmax(0, 1fr) minmax(0, 1fr); gap: 2px; background: #464646; padding-right: 1px; }
.view { position: relative; background: #353535; overflow: hidden; }
.view > svg { display: block; width: 100%; height: 100%; }
.active::after { content: ""; position: absolute; inset: 0; border: 1px solid #87772f; }
.vlabel { position: absolute; left: 4px; top: 3px; font-family: "DejaVu Sans", "Noto Sans CJK SC", sans-serif; }
.grid { stroke: #444; fill: none; }
.pgrid { stroke: #555; fill: none; stroke-width: 1; opacity: .75; }
.axis { stroke: #111; fill: none; }
.wire { stroke: #d8d8d8; fill: none; }
.gizmo { stroke: #8c3030; fill: none; }
.green { stroke: #1c6f26; fill: none; }
.blue { stroke: #20207c; fill: none; stroke-width: 2; }

.ribbon { display: grid; grid-template-columns: 40px 14px; border-top: 3px solid #333; }
.ribbon-body { background: linear-gradient(90deg, #333, #414141); padding: 2px 0 0 2px; }
.poly { flex-direction: column; width: 37px; height: 34px; background: #5c5c5c; line-height: 7px; }
.poly svg { width: 16px; height: 16px; margin-bottom: 3px; }
.ribbon-tabs { background: #434343; border: 1px solid #333; border-width: 0 1px; display: flex; flex-direction: column; align-items: flex-start; gap: 27px; padding-top: 2px; }
.ribbon-tabs button { writing-mode: vertical-rl; text-orientation: sideways; width: 10px; color: #999; }
.ribbon-tabs .cur { height: 30px; background: #616161; color: #eee; margin-bottom: -12px; justify-content: flex-end; }
.ribbon-tabs .pill { width: 5px; height: 8px; background: #eee; color: #222; margin: -2px 0 0 2px; }

.command { display: flex; flex-direction: column; min-height: 0; padding: 4px 2px 0 1px; border-right: 1px solid #28505c; }
.cmd-tabs { display: flex; gap: 4px; padding-bottom: 4px; }
.cmd-tabs button { width: 13px; height: 13px; }
.cmd-tabs svg { width: 10px; height: 10px; }
.cmd-tabs .cur { background: #373737; }
.cmd-name { display: flex; gap: 4px; height: 10px; margin-bottom: 6px; }
.cmd-name input { flex: 1; background: #646464; padding: 0 1px; }
.cmd-name button { width: 8px; background: #86bb32; }
.modlist { width: 100%; height: 10px; flex: none; background-color: #5c5c5c; }
.drop { flex: 1; min-height: 0; display: flex; border-top: 1px solid #3d6f95; border-left: 1px solid #3d6f95; background: #646464; }
.drop ul { flex: 1; display: grid; grid-auto-rows: minmax(0, 1fr); list-style: none; margin: 0; padding: 0 0 33px; }
.drop li { display: flex; align-items: center; padding-left: 17px; }
.marked { margin: 0 1px 0 3px; background: #2d2d2d; outline: 3px solid #e63b3f; position: relative; color: #fff; }
.drop .marked { padding-left: 14px; }
.vscroll { width: 9px; background: #f4f4f4; display: grid; grid-template-rows: 10px 1fr; }
.vscroll svg { width: 6px; height: 6px; }
.vscroll span { background: linear-gradient(transparent 43%, #c9c9c9 43%, #c9c9c9 87%, transparent 87%); }

footer { flex: none; }
.slider { display: flex; height: 12px; padding: 2px 0 1px 22px; gap: 1px; }
.slider button { width: 9px; background: #555; }
.slider span { width: 63px; background: #606060; text-align: center; }
.trackbar { display: flex; height: 16px; padding-left: 20px; padding-right: 30px; background: linear-gradient(#2b2b2b, #333); border-bottom: 1px solid #444; }
.mini { width: 32px; background: #444; }
.mini svg { width: 11px; height: 11px; }
.ruler { flex: 1; display: grid; grid-template-columns: repeat(20, minmax(0, 1fr)); align-items: end; line-height: 7px; font-family: "DejaVu Sans", sans-serif; background: linear-gradient(90deg, #666 1px, transparent 1px) 0 1px / 1% 6px repeat-x; }
.ruler span { grid-row: 1; text-indent: -3px; }
.ruler .head { width: 4px; height: 14px; background: #aaa138; margin-left: -2px; }

.status { display: flex; height: 28px; padding: 1px 0 2px 2px; }
.script { width: 52px; display: grid; grid-template-rows: 12px 12px; gap: 1px; }
.script span { background: #dfc5c7; }
.script input { width: 100%; background: #f7f7f7; color: #888; padding: 0 3px; }
.messages { padding: 2px 0 0 4px; display: flex; flex-direction: column; gap: 4px; }
.messages p { margin: 0; }
.readout { margin-left: auto; margin-right: 19px; display: flex; flex-direction: column; gap: 2px; font-family: "Liberation Sans", "Noto Sans CJK SC", sans-serif; }
.line { display: flex; align-items: center; height: 12px; gap: 5px; }
.line svg { width: 9px; height: 9px; }
.line input { width: 30px; height: 9px; background: #5a5a5a; }
.gridsize { margin-left: 3px; }
.tag { justify-content: flex-end; }
.tag button { gap: 3px; }
.playback { width: 246px; display: flex; flex-direction: column; gap: 1px; }
.playback .line { gap: 1px; }
.playback input { width: 60px; padding-left: 2px; }

.taskbar { display: flex; height: 4px; background: #10151d; padding-left: 25px; }
.search { width: 179px; background: #f3f3f3; }
.task { width: 25px; margin-left: 53px; background: #46444a; }

.bai { position: absolute; right: 140px; bottom: 21px; width: 92px; color: #d3d3d3; font: 26px/26px "Liberation Sans", sans-serif; display: flex; flex-direction: column; gap: 3px; }
.bai b { font-size: 40px; line-height: 32px; }
.bai span { padding-left: 2px; }
.paw { position: absolute; right: 129px; bottom: 92px; width: 30px; height: 16px; }
.brand { position: absolute; right: 0; bottom: 0; width: 200px; height: 95px; background: #203058; color: #e4e6ec; display: flex; align-items: center; gap: 5px; padding-left: 11px; font-family: "Liberation Sans", "Noto Sans CJK SC", sans-serif; }
.brand svg { width: 48px; height: 63px; flex: none; }
.brand strong { display: flex; align-items: center; font-size: 28px; line-height: 33px; font-weight: 500; white-space: nowrap; }
.brand strong span { font-size: 32px; font-weight: 400; }
.brand em { display: block; font-style: normal; font-size: 24px; line-height: 24px; }
```
